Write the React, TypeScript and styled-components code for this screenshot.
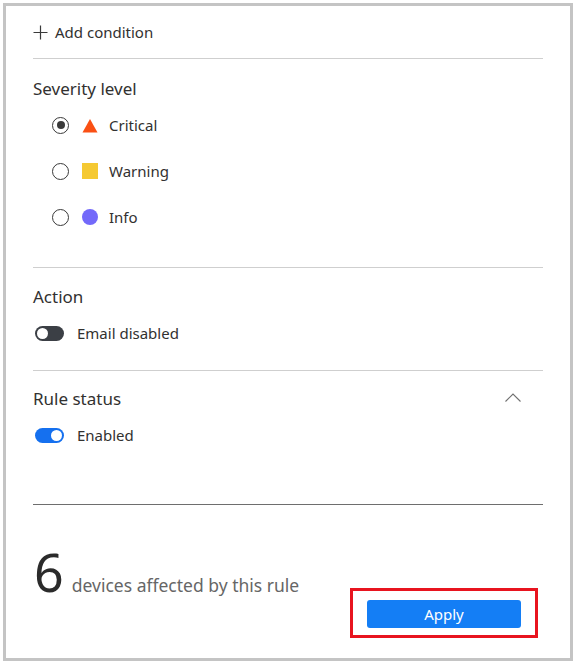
import styled, { createGlobalStyle } from 'styled-components';

const GlobalStyle = createGlobalStyle`
  body {
    margin: 0;
    background: #ffffff;
    font-family: "Noto Sans", "Open Sans", sans-serif;
    color: #323130;
  }
`;

const Panel = styled.div`
  box-sizing: border-box;
  margin: 3px;
  width: 570px;
  height: 658px;
  border: 3px solid #c4c4c4;
  padding: 0 27px;
  display: flex;
  flex-direction: column;
`;

const AddRow = styled.div`
  height: 52px;
  display: flex;
  align-items: center;
  gap: 7px;
  font-size: 15px;
  color: #323130;
`;

const Divider = styled.div<{ $dark?: boolean }>`
  height: 1px;
  background: ${(p) => (p.$dark ? '#6e6e6e' : '#cfcfcf')};
`;

const Section = styled.div<{ $top: number; $bottom: number }>`
  padding: ${(p) => p.$top}px 0 ${(p) => p.$bottom}px;
  display: flex;
  flex-direction: column;
`;

const TitleRow = styled.div`
  display: flex;
  align-items: center;
  justify-content: space-between;
`;

const Title = styled.div`
  font-size: 17px;
  line-height: 22px;
  color: #323130;
`;

const RadioList = styled.div`
  margin-top: 2px;
  padding-left: 19px;
  display: flex;
  flex-direction: column;
`;

const RadioRow = styled.label`
  height: 46px;
  display: flex;
  align-items: center;
  font-size: 15px;
  color: #323130;
`;

const Radio = styled.span<{ $checked?: boolean }>`
  box-sizing: border-box;
  width: 17px;
  height: 17px;
  border-radius: 50%;
  border: 1.5px solid #3a3a3a;
  display: flex;
  align-items: center;
  justify-content: center;
  margin-right: 13px;
  &::after {
    content: '';
    display: ${(p) => (p.$checked ? 'block' : 'none')};
    width: 8px;
    height: 8px;
    border-radius: 50%;
    background: #3a3a3a;
  }
`;

const ShapeBox = styled.span`
  width: 16px;
  height: 16px;
  margin-right: 11px;
  display: flex;
  align-items: center;
  justify-content: center;
`;

const ToggleRow = styled.div`
  height: 36px;
  margin-top: 7px;
  display: flex;
  align-items: center;
  font-size: 15px;
  color: #323130;
`;

const Toggle = styled.span<{ $on?: boolean }>`
  box-sizing: border-box;
  width: 29px;
  height: 15px;
  margin-left: 2px;
  margin-right: 13px;
  border-radius: 8px;
  background: ${(p) => (p.$on ? '#1570ef' : '#3b3f45')};
  display: flex;
  align-items: center;
  padding: 0 2px;
  justify-content: ${(p) => (p.$on ? 'flex-end' : 'flex-start')};
  &::after {
    content: '';
    width: 11px;
    height: 11px;
    border-radius: 50%;
    background: #ffffff;
  }
`;

const Chevron = styled.span`
  margin-right: 22px;
  margin-top: -4px;
  display: flex;
`;

const Footer = styled.div`
  flex: 1;
  display: flex;
  justify-content: space-between;
  align-items: flex-start;
  padding-top: 37px;
`;

const Count = styled.div`
  display: flex;
  align-items: baseline;
  gap: 9px;
  padding-left: 1px;
`;

const Big = styled.span`
  font-size: 52px;
  line-height: 60px;
  color: #2b2b2b;
  font-weight: 400;
  letter-spacing: -1px;
`;

const CountText = styled.span`
  font-size: 17.5px;
  color: #666666;
`;

const Highlight = styled.div`
  margin-top: 46px;
  margin-right: 5px;
  border: 3px solid #e8141f;
  padding: 9px 14px 7px;
`;

const ApplyButton = styled.button`
  width: 154px;
  height: 28px;
  border: none;
  border-radius: 3px;
  background: #147ef5;
  color: #ffffff;
  font-family: "Noto Sans", "Open Sans", sans-serif;
  font-size: 15px;
  display: flex;
  align-items: center;
  justify-content: center;
  cursor: pointer;
`;

const severities = [
  { label: 'Critical', shape: 'triangle', checked: true },
  { label: 'Warning', shape: 'square', checked: false },
  { label: 'Info', shape: 'circle', checked: false },
];

function Shape({ kind }: { kind: string }) {
  if (kind === 'triangle') {
    return (
      <svg width="16" height="15" viewBox="0 0 16 15">
        <polygon points="8,1 15.5,14.5 0.5,14.5" fill="#fa5014" />
      </svg>
    );
  }
  if (kind === 'square') {
    return (
      <svg width="16" height="16" viewBox="0 0 16 16">
        <rect x="0" y="0" width="16" height="16" fill="#f5c932" />
      </svg>
    );
  }
  return (
    <svg width="16" height="16" viewBox="0 0 16 16">
      <circle cx="8" cy="8" r="8" fill="#7369fa" />
    </svg>
  );
}

export default function App() {
  return (
    <>
      <GlobalStyle />
      <Panel>
        <AddRow>
          <svg width="15" height="15" viewBox="0 0 15 15">
            <path d="M7.5 0.5v14M0.5 7.5h14" stroke="#3a3a3a" strokeWidth="1.2" fill="none" />
          </svg>
          Add condition
        </AddRow>
        <Divider />

        <Section $top={19} $bottom={27}>
          <Title>Severity level</Title>
          <RadioList>
            {severities.map((s) => (
              <RadioRow key={s.label}>
                <Radio $checked={s.checked} />
                <ShapeBox>
                  <Shape kind={s.shape} />
                </ShapeBox>
                {s.label}
              </RadioRow>
            ))}
          </RadioList>
        </Section>
        <Divider />

        <Section $top={18} $bottom={19}>
          <Title>Action</Title>
          <ToggleRow>
            <Toggle />
            Email disabled
          </ToggleRow>
        </Section>
        <Divider />

        <Section $top={17} $bottom={51}>
          <TitleRow>
            <Title>Rule status</Title>
            <Chevron>
              <svg width="16" height="9" viewBox="0 0 16 9">
                <path d="M0.5 8.5L8 1l7.5 7.5" stroke="#707070" strokeWidth="1.1" fill="none" />
              </svg>
            </Chevron>
          </TitleRow>
          <ToggleRow>
            <Toggle $on />
            Enabled
          </ToggleRow>
        </Section>
        <Divider $dark />

        <Footer>
          <Count>
            <Big>6</Big>
            <CountText>devices affected by this rule</CountText>
          </Count>
          <Highlight>
            <ApplyButton>Apply</ApplyButton>
          </Highlight>
        </Footer>
      </Panel>
    </>
  );
}
